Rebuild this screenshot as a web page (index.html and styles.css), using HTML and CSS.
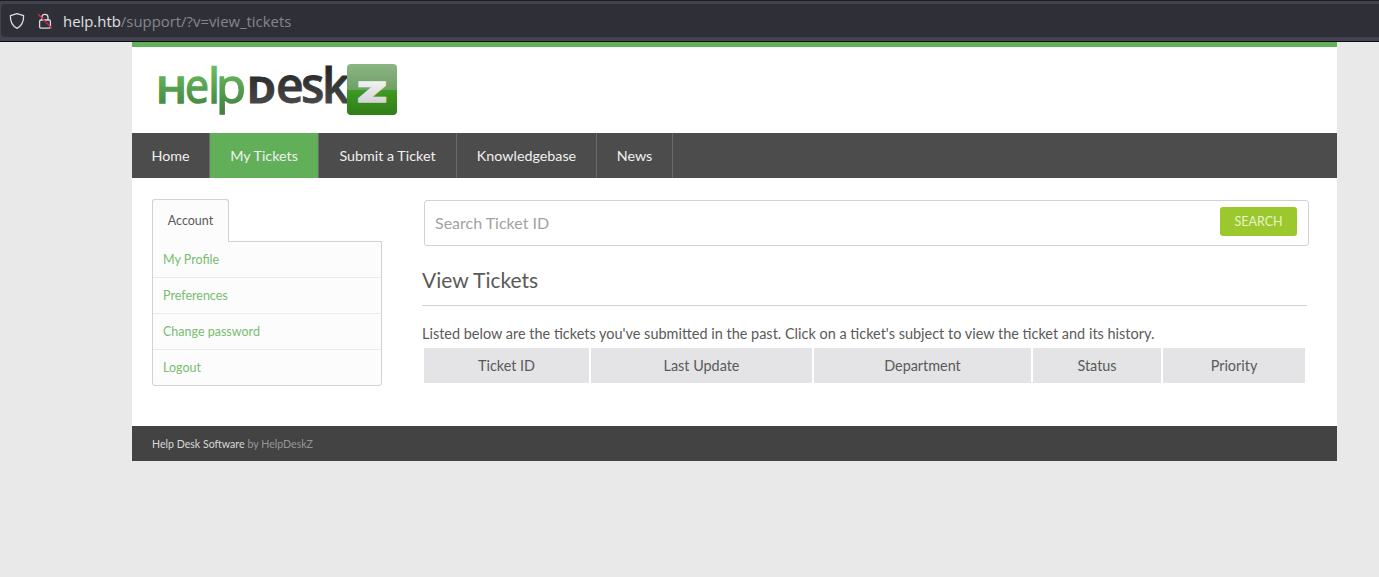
FILE: index.html
```html
<!DOCTYPE html>
<html lang="en">
<head>
<meta charset="utf-8">
<title>Help Desk Software by HelpDeskZ</title>
<link rel="stylesheet" href="styles.css">
</head>
<body>
<div class="browser-bar">
  <div class="url-field">
    <svg class="icon-shield" width="16" height="18" viewBox="0 0 16 18" fill="none"><path d="M8 1.6 L14.6 3.6 C14.8 9.5 13 13.8 8 16.4 C3 13.8 1.2 9.5 1.4 3.6 Z" stroke="#dcdce0" stroke-width="1.3" stroke-linejoin="round"/></svg>
    <svg class="icon-lock" width="16" height="18" viewBox="0 0 16 18" fill="none"><path d="M4.8 8 V5.2 C4.8 1.5 11 1.5 11 5.2 V8" stroke="#dcdce0" stroke-width="1.3"/><rect x="2.6" y="8" width="10.8" height="8.2" rx="1.4" stroke="#dcdce0" stroke-width="1.3"/><path d="M1 2 L15 16.5" stroke="#d8264c" stroke-width="1.2"/></svg>
    <span class="url"><span class="url-host">help.htb</span>/support/?v=view_tickets</span>
  </div>
</div>
<div class="page">
  <header class="brand">
    <svg class="logo" width="250" height="60" viewBox="0 0 250 60" role="img" aria-label="HelpDeskZ">
      <defs>
        <linearGradient id="lg-green" gradientUnits="userSpaceOnUse" x1="0" y1="4" x2="0" y2="56"><stop offset="0" stop-color="#6cc062"/><stop offset="1" stop-color="#3f7a3b"/></linearGradient>
        <linearGradient id="lg-dark" gradientUnits="userSpaceOnUse" x1="0" y1="4" x2="0" y2="44"><stop offset="0" stop-color="#222"/><stop offset="1" stop-color="#484848"/></linearGradient>
        <linearGradient id="lg-tile" x1="0" y1="0" x2="0" y2="1"><stop offset="0" stop-color="#8cb584"/><stop offset="0.5" stop-color="#6fa066"/><stop offset="0.51" stop-color="#3f9a22"/><stop offset="1" stop-color="#2f7d16"/></linearGradient>
        <linearGradient id="lg-z" x1="0" y1="0" x2="0" y2="1"><stop offset="0" stop-color="#ffffff"/><stop offset="1" stop-color="#c9c9c9"/></linearGradient>
      </defs>
      <text class="logo-cap" x="4" y="43" fill="url(#lg-green)" stroke="url(#lg-green)" textLength="31" lengthAdjust="spacingAndGlyphs">H</text>
      <text class="logo-low" x="33" y="43" fill="url(#lg-green)" stroke="url(#lg-green)" textLength="24" lengthAdjust="spacingAndGlyphs">e</text>
      <text class="logo-low" x="56" y="43" fill="url(#lg-green)" stroke="url(#lg-green)">l</text>
      <text class="logo-low" x="64" y="43" fill="url(#lg-green)" stroke="url(#lg-green)" textLength="30" lengthAdjust="spacingAndGlyphs">p</text>
      <text class="logo-dcap" x="95" y="43" fill="url(#lg-dark)" stroke="url(#lg-dark)" textLength="29" lengthAdjust="spacingAndGlyphs">D</text>
      <text class="logo-dlow" x="124" y="43" fill="url(#lg-dark)" stroke="url(#lg-dark)">e</text>
      <text class="logo-dlow" x="149" y="43" fill="url(#lg-dark)" stroke="url(#lg-dark)">s</text>
      <text class="logo-dlow" x="170" y="43" fill="url(#lg-dark)" stroke="url(#lg-dark)">k</text>
      <rect x="195" y="4" width="50" height="51" rx="4" fill="url(#lg-tile)"/>
      <text class="logo-z" x="206" y="42" fill="url(#lg-z)" stroke="url(#lg-z)" textLength="28" lengthAdjust="spacingAndGlyphs">Z</text>
    </svg>
  </header>
  <nav class="nav">
    <a class="nav-item">Home</a>
    <a class="nav-item is-active">My Tickets</a>
    <a class="nav-item">Submit a Ticket</a>
    <a class="nav-item">Knowledgebase</a>
    <a class="nav-item">News</a>
  </nav>
  <main class="main">
    <aside class="side">
      <div class="tab"><span class="tab-label">Account</span></div>
      <ul class="menu">
        <li class="menu-item">My Profile</li>
        <li class="menu-item">Preferences</li>
        <li class="menu-item">Change password</li>
        <li class="menu-item">Logout</li>
      </ul>
    </aside>
    <section class="content">
      <form class="search">
        <span class="search-text">Search Ticket ID</span>
        <span class="search-btn">SEARCH</span>
      </form>
      <h1 class="title">View Tickets</h1>
      <p class="intro">Listed below are the tickets you've submitted in the past. Click on a ticket's subject to view the ticket and its history.</p>
      <table class="tickets">
        <thead>
          <tr>
            <th class="c-id">Ticket ID</th>
            <th class="c-update">Last Update</th>
            <th class="c-dept">Department</th>
            <th class="c-status">Status</th>
            <th class="c-prio">Priority</th>
          </tr>
        </thead>
      </table>
    </section>
  </main>
  <footer class="footer"><span class="footer-strong">Help Desk Software</span> by HelpDeskZ</footer>
</div>
</body>
</html>
```
FILE: styles.css
```css
* { box-sizing: border-box; }
html, body { margin: 0; padding: 0; height: 100%; overflow: hidden; }
body {
  background: #e9e9e9;
  font-family: "Lato", "Liberation Sans", sans-serif;
  color: #5a5a5a;
}
.browser-bar {
  height: 42px;
  background: #41444e;
  border-top: 1px solid #1c1c20;
  border-bottom: 1px solid #0e0e10;
  padding: 3px 0 3px 1px;
}
.url-field {
  height: 33px;
  background: #2f3037;
  border-radius: 4px 0 0 4px;
  display: flex;
  align-items: center;
  padding-left: 8px;
}
.icon-shield { margin-right: 12px; flex: none; }
.icon-lock { margin-right: 10px; flex: none; }
.url { font-family: "Open Sans", sans-serif; font-size: 14.9px; color: #85868c; }
.url-host { color: #e0e0e4; }

.page {
  width: 1205px;
  margin-left: 132px;
  background: #fff;
  border-top: 5px solid #62af59;
}
.brand { height: 86px; padding: 13px 0 0 20px; }
.logo { display: block; overflow: visible; }
.logo text { font-family: "Open Sans", sans-serif; }
.logo-cap { font-size: 36px; font-weight: 600; stroke-width: 1.4px; }
.logo-low { font-size: 48px; font-weight: 400; stroke-width: 1.4px; }
.logo-dcap { font-size: 36px; font-weight: 700; stroke-width: 1px; }
.logo-dlow { font-size: 48px; font-weight: 600; stroke-width: 0.8px; }
.logo-z { font-size: 28px; font-weight: 800; stroke-width: 1.6px; }

.nav {
  display: grid;
  grid-template-columns: 78px 109px 138px 140px 76px;
  height: 45px;
  background: #4c4c4c;
}
.nav-item {
  display: flex;
  align-items: center;
  justify-content: center;
  border-right: 1px solid #6a6a6a;
  color: #f0f0f0;
  font-size: 14.3px;
}
.nav-item.is-active { background: #62af59; }

.main { display: flex; padding: 21px 30px 40px 20px; }
.side { width: 230px; flex: none; }
.tab {
  width: 77px;
  height: 43px;
  margin-bottom: -1px;
  position: relative;
  z-index: 1;
  display: flex;
  align-items: center;
  justify-content: center;
  padding-bottom: 2px;
  background: #fcfcfc;
  border: 1px solid #d2d2d4;
  border-bottom: none;
  border-radius: 3px 3px 0 0;
  font-size: 12.5px;
}
.menu {
  list-style: none;
  margin: 0;
  padding: 0;
  background: #fcfcfc;
  border: 1px solid #d2d2d4;
  border-radius: 0 0 3px 3px;
}
.menu-item {
  height: 36px;
  display: flex;
  align-items: center;
  padding-left: 10px;
  border-bottom: 1px solid #ebebeb;
  color: #78bd70;
  font-size: 12.5px;
}
.menu-item:last-child { border-bottom: none; height: 35px; }

.content { flex: 1; margin-left: 40px; }
.search {
  margin: 1px 0 0 2px;
  width: 885px;
  height: 46px;
  display: flex;
  align-items: center;
  justify-content: space-between;
  padding: 0 11px 2px 10px;
  border: 1px solid #d2d2d4;
  border-radius: 3px;
}
.search-text { color: #a2a2a2; font-size: 16px; }
.search-btn {
  width: 77px;
  height: 29px;
  margin-top: -1px;
  display: flex;
  align-items: center;
  justify-content: center;
  background: #9bc82d;
  border-radius: 3px;
  color: #e8f3c8;
  font-size: 12.5px;
}
.title {
  margin: 20px 0 0;
  padding-bottom: 11px;
  border-bottom: 1px solid #d2d2d4;
  font-size: 21px;
  line-height: 28px;
  font-weight: 400;
  width: 885px;
}
.intro { margin: 19px 0 0; font-size: 14.48px; line-height: 18px; white-space: nowrap; }
.tickets {
  width: 885px;
  margin-top: 5px;
  border-collapse: separate;
  border-spacing: 2px 0;
  table-layout: fixed;
}
.tickets th {
  height: 35px;
  padding: 0;
  background: #e4e4e6;
  font-weight: 400;
  font-size: 14.4px;
  text-align: center;
}
.c-id { width: 165px; }
.c-update { width: 221px; }
.c-dept { width: 217px; }
.c-status { width: 128px; }

.footer {
  height: 35px;
  display: flex;
  align-items: center;
  gap: 3px;
  padding-left: 20px;
  background: #434343;
  color: #969696;
  font-size: 10.6px;
}
.footer-strong { color: #d8d8d8; }
```
